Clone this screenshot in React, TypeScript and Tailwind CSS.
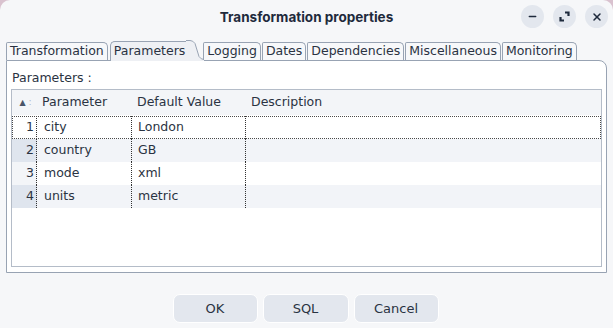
import { Minus, X } from 'lucide-react';

const tabs = ['Transformation', 'Parameters', 'Logging', 'Dates', 'Dependencies', 'Miscellaneous', 'Monitoring'];

const rows = [
  { n: 1, name: 'city', value: 'London' },
  { n: 2, name: 'country', value: 'GB' },
  { n: 3, name: 'mode', value: 'xml' },
  { n: 4, name: 'units', value: 'metric' },
];

const swing = { fontFamily: '"DejaVu Sans", Verdana, sans-serif' };

function TitleButton({ children }: { children: React.ReactNode }) {
  return (
    <div className="w-[23px] h-[23px] rounded-full bg-[#e3e7ee] flex items-center justify-center text-[#1e2a3c]">
      {children}
    </div>
  );
}

export default function App() {
  return (
    <div className="w-[613px] h-[328px] bg-[#d9c2cf] overflow-hidden">
      <div className="w-full h-full bg-[#f6f7f9] rounded-t-[10px] flex flex-col">
        {/* Title bar */}
        <div className="h-[34px] shrink-0 relative flex items-center justify-center">
          <span
            className="text-[13.5px] font-bold text-[#1e2a3c]"
            style={{ fontFamily: 'Inter, "Noto Sans", sans-serif' }}
          >
            Transformation properties
          </span>
          <div className="absolute right-[5px] top-[5px] flex gap-[9px]">
            <TitleButton>
              <Minus className="w-[11px] h-[11px]" strokeWidth={3} />
            </TitleButton>
            <TitleButton>
              <svg width="11" height="11" viewBox="0 0 11 11" fill="none" stroke="currentColor" strokeWidth="2.2">
                <path d="M6 1.5h3.5V5" />
                <path d="M1.5 6v3.5H5" />
              </svg>
            </TitleButton>
            <TitleButton>
              <X className="w-[12px] h-[12px]" strokeWidth={3} />
            </TitleButton>
          </div>
        </div>

        {/* Tabs + panel */}
        <div className="px-[6px] pt-[6px]" style={swing}>
          <div className="flex items-end h-[20px] text-[12.5px] text-[#2a3342]">
            {tabs.map(t =>
              t === 'Parameters' ? (
                <div key={t} className="relative h-[21px] flex items-end ml-[1px]">
                  <div className="h-[20px] pl-[3px] pr-[1px] flex items-center bg-[#eef0f4] border-l border-t border-[#98a3b3] rounded-tl-[5px] mb-[-1px] relative z-10">
                    {t}
                  </div>
                  <svg width="18" height="21" viewBox="0 0 18 21" className="mb-[-1px] relative z-10 -mr-[1px]">
                    <path d="M0 1 H4 Q7 1 9 4 L13 17 Q15 20 18 20 V21 H0 Z" fill="#eef0f4" />
                    <path d="M0 0.5 H4 Q7 0.5 9 3.5 L13 16.5 Q15 19.5 18 19.5" fill="none" stroke="#98a3b3" />
                  </svg>
                </div>
              ) : (
                <div
                  key={t}
                  className="h-[18px] px-[3px] mr-[1px] flex items-center bg-[#f7f8fa] border-l border-t border-r border-[#98a3b3] rounded-tr-[5px] rounded-tl-[2px]"
                >
                  {t}
                </div>
              )
            )}
          </div>

          <div className="h-[213px] bg-white border border-[#98a3b3] rounded-tr-[8px] px-[4px] pt-[8px]">
            <div className="text-[12.5px] text-[#2a3342] pl-[1px] h-[20px]">Parameters :</div>
            <div className="h-[178px] border border-[#b4bcc8] text-[12.5px] text-[#2a3342]">
              {/* Header */}
              <div className="h-[25px] flex items-center bg-[#f3f5f8]">
                <div className="w-[25px] flex items-center justify-center">
                  <span className="text-[8px] text-[#4a5568] ml-[2px]">▲</span>
                  <span className="text-[8px] text-[#aab2bf] ml-[3px]">:</span>
                </div>
                <div className="w-[95px] pl-[5px]">Parameter</div>
                <div className="w-[114px] pl-[5px]">Default Value</div>
                <div className="pl-[5px]">Description</div>
              </div>
              <div className="h-[1px]" />
              {rows.map(r => {
                const even = r.n % 2 === 0;
                return (
                  <div
                    key={r.n}
                    className={
                      'h-[23px] flex items-stretch ' +
                      (even ? 'bg-[#f2f4f8] ' : 'bg-white ') +
                      (r.n === 1 ? 'outline outline-1 outline-dotted outline-[#4a4a4a] outline-offset-[-1px]' : '')
                    }
                  >
                    <div
                      className={
                        'w-[25px] flex items-center justify-end pr-[2px] border-r border-dotted border-[#333] ' +
                        (even ? 'bg-[#dfe5ee]' : r.n === 1 ? 'bg-white' : 'bg-[#f3f5f8]')
                      }
                    >
                      {r.n}
                    </div>
                    <div className="w-[95px] flex items-center pl-[7px] border-r border-dotted border-[#333]">
                      {r.name}
                    </div>
                    <div className="w-[114px] flex items-center pl-[6px] border-r border-dotted border-[#333]">
                      {r.value}
                    </div>
                    <div className="flex-1" />
                  </div>
                );
              })}
            </div>
          </div>
        </div>

        {/* Buttons */}
        <div className="flex justify-center gap-[5px] mt-[21px] pr-[2px]" style={swing}>
          {['OK', 'SQL', 'Cancel'].map((b, i) => (
            <div
              key={b}
              className={
                'h-[29px] border border-white bg-[#e3e7ee] rounded-[7px] flex items-center justify-center text-[13px] text-[#2a3342] ' +
                (i === 1 ? 'w-[86px]' : 'w-[85px]')
              }
            >
              {b}
            </div>
          ))}
        </div>
      </div>
    </div>
  );
}
